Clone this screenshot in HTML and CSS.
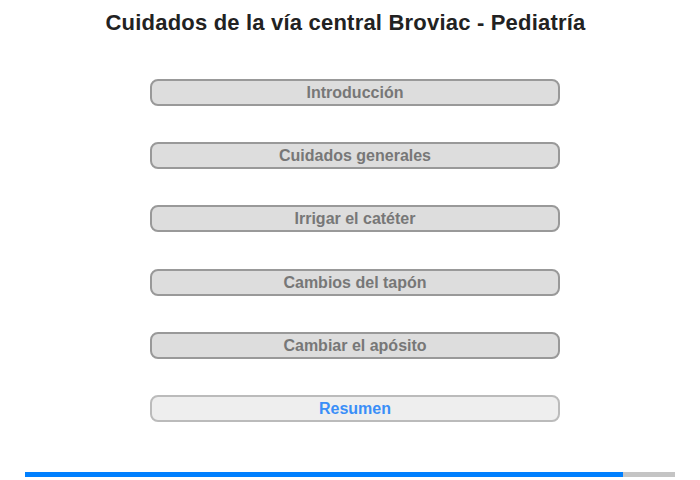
FILE: index.html
```html
<!DOCTYPE html>
<html lang="es">
<head>
    <meta charset="UTF-8">
    <meta name="viewport" content="width=device-width, initial-scale=1.0">
    <title>Cuidados de la vía central Broviac - Pediatría</title>
    <link rel="stylesheet" href="styles.css">
</head>
<body>

    <h1>Cuidados de la vía central Broviac - Pediatría</h1>

    <!-- Sections -->
    <div class="menu">
        <a class="section" href="#">Introducción</a>
        <a class="section" href="#">Cuidados generales</a>
        <a class="section" href="#">Irrigar el catéter</a>
        <a class="section" href="#">Cambios del tapón</a>
        <a class="section" href="#">Cambiar el apósito</a>
        <a class="section summary" href="#">Resumen</a>
    </div>

    <!-- Progress -->
    <div class="progress">
        <div class="progress-fill" style="width: 92%"></div>
    </div>

</body>
</html>
```

FILE: styles.css
```css
body {
    font-family: "Liberation Sans", Arial, sans-serif;
    background-color: #fff;
    margin: 0;
    padding: 0;
}
h1 {
    margin: 0;
    padding-top: 10px;
    padding-right: 9px;
    font-size: 22px;
    line-height: 26px;
    letter-spacing: 0.2px;
    text-align: center;
    color: #222;
}
.menu {
    display: flex;
    flex-direction: column;
    gap: 36.2px;
    width: 410px;
    margin: 43px 0 0 150px;
}
.section {
    display: block;
    box-sizing: border-box;
    height: 27px;
    line-height: 23px;
    border: 2px solid #999;
    border-radius: 8px;
    background-color: #ddd;
    color: #777;
    font-size: 16px;
    font-weight: bold;
    text-align: center;
    text-decoration: none;
}
.section.summary {
    background-color: #eee;
    border-color: #bbb;
    color: #3a8ef8;
}
.progress {
    height: 5px;
    margin: 50px 25px 0;
    background-color: #c4c4c4;
}
.progress-fill {
    height: 100%;
    background-color: #0080ff;
}
```
